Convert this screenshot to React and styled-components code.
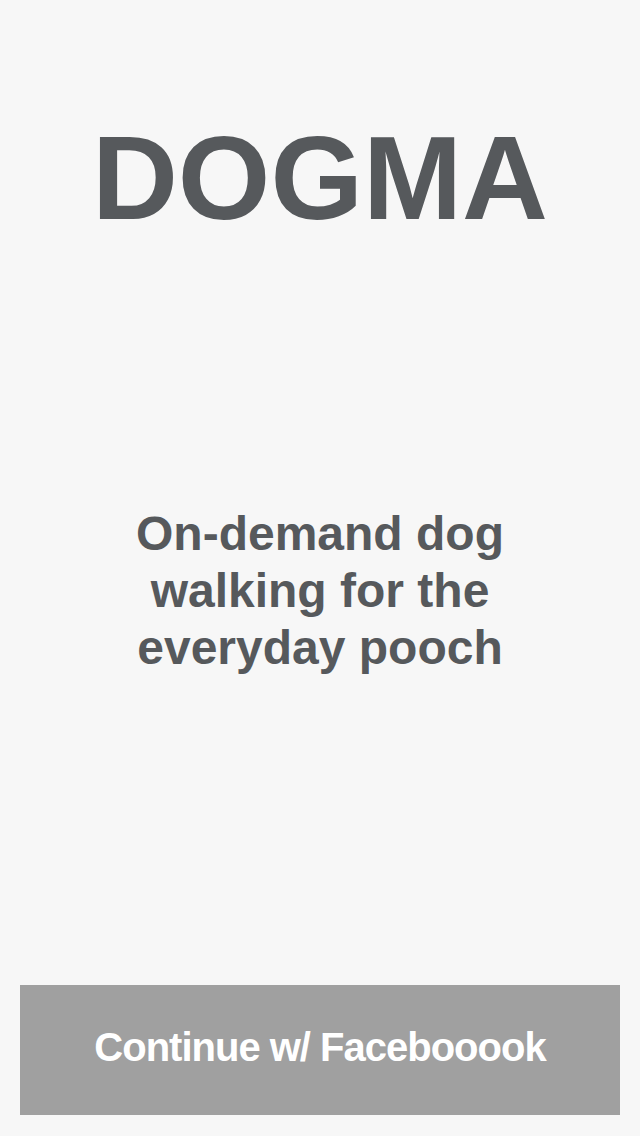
import React from 'react';
import styled, { createGlobalStyle } from 'styled-components';

const GlobalStyle = createGlobalStyle`
    html, body {
        margin: 0;
        padding: 0;
        background-color: #f7f7f7;
    }
    body {
        font-family: "Liberation Sans", Arial, Helvetica, sans-serif;
    }
`;

const Screen = styled.div`
    display: flex;
    flex-direction: column;
    align-items: center;
    min-height: 100vh;
    box-sizing: border-box;
    padding: 0 20px 21px;
    background-color: #f7f7f7;
`;

const Logo = styled.h1`
    margin: 119px 0 0;
    font-size: 119px;
    line-height: 118px;
    font-weight: 700;
    color: #56595c;
    letter-spacing: 0;
`;

const Tagline = styled.p`
    margin: 268px 0 0;
    max-width: 420px;
    font-size: 48px;
    line-height: 57px;
    font-weight: 700;
    text-align: center;
    color: #56595c;
`;

const FacebookButton = styled.button`
    margin-top: auto;
    width: 100%;
    height: 130px;
    padding: 0 0 5px;
    border: 0;
    border-radius: 0;
    background-color: #a0a0a0;
    color: #ffffff;
    font-family: "Liberation Sans", Arial, Helvetica, sans-serif;
    font-size: 40px;
    font-weight: 700;
    letter-spacing: -1px;
    cursor: pointer;
`;

export default function App() {
    return (
        <>
            <GlobalStyle />
            <Screen>
                <Logo>DOGMA</Logo>
                <Tagline>On-demand dog walking for the everyday pooch</Tagline>
                <FacebookButton type="button">Continue w/ Facebooook</FacebookButton>
            </Screen>
        </>
    );
}
